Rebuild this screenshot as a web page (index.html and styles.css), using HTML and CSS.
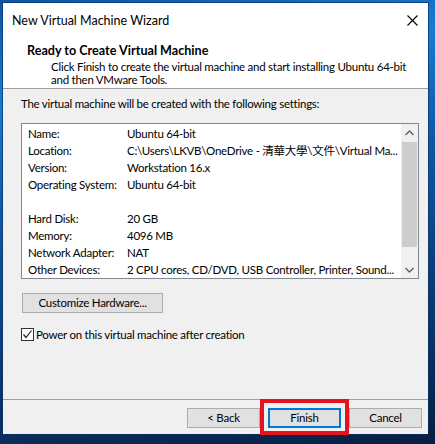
FILE: index.html
```html
<!DOCTYPE html>
<html>
<head>
<meta charset="utf-8">
<link rel="stylesheet" href="styles.css">
</head>
<body>
<div class="desktop">
  <div class="window">
    <div class="header">
      <div class="titlebar">
        <span class="title">New Virtual Machine Wizard</span>
        <svg class="close" width="11" height="11" viewBox="0 0 11 11"><path d="M0.5 0.5 L10.5 10.5 M10.5 0.5 L0.5 10.5" stroke="#000" stroke-width="1.1" fill="none"/></svg>
      </div>
      <div class="intro">
        <div class="intro-title">Ready to Create Virtual Machine</div>
        <div class="intro-desc">Click Finish to create the virtual machine and start installing Ubuntu 64-bit<br>and then VMware Tools.</div>
      </div>
    </div>
    <div class="content">
      <p class="lead">The virtual machine will be created with the following settings:</p>
      <div class="listbox">
        <div class="rows">
          <div class="row"><span class="key">Name:</span><span class="val">Ubuntu 64-bit</span></div>
          <div class="row"><span class="key">Location:</span><span class="val">C:\Users\LKVB\OneDrive - 清華大學\文件\Virtual Ma...</span></div>
          <div class="row"><span class="key">Version:</span><span class="val">Workstation 16.x</span></div>
          <div class="row"><span class="key">Operating System:</span><span class="val">Ubuntu 64-bit</span></div>
          <div class="row"></div>
          <div class="row"><span class="key">Hard Disk:</span><span class="val">20 GB</span></div>
          <div class="row"><span class="key">Memory:</span><span class="val">4096 MB</span></div>
          <div class="row"><span class="key">Network Adapter:</span><span class="val">NAT</span></div>
          <div class="row"><span class="key">Other Devices:</span><span class="val">2 CPU cores, CD/DVD, USB Controller, Printer, Sound...</span></div>
        </div>
        <div class="scrollbar">
          <div class="sb-btn"><svg width="9" height="6" viewBox="0 0 9 6"><path d="M0.5 5 L4.5 1 L8.5 5" stroke="#606060" stroke-width="1.4" fill="none"/></svg></div>
          <div class="sb-track"><div class="sb-thumb"></div></div>
          <div class="sb-btn"><svg width="9" height="6" viewBox="0 0 9 6"><path d="M0.5 1 L4.5 5 L8.5 1" stroke="#606060" stroke-width="1.4" fill="none"/></svg></div>
        </div>
      </div>
      <button class="btn btn-custom">Customize Hardware...</button>
      <label class="check">
        <span class="checkbox"><svg width="11" height="11" viewBox="0 0 11 11"><path d="M1.5 5.5 L4 8.5 L9.5 1.5" stroke="#222" stroke-width="1.2" fill="none"/></svg></span>
        <span>Power on this virtual machine after creation</span>
      </label>
    </div>
    <div class="footer">
      <button class="btn btn-nav">&lt; Back</button>
      <button class="btn btn-nav btn-default">Finish</button>
      <button class="btn btn-nav">Cancel</button>
    </div>
  </div>
  <div class="highlight"></div>
</div>
</body>
</html>
```
FILE: styles.css
```css
html, body {
  margin: 0;
  padding: 0;
}
body {
  width: 435px;
  height: 444px;
  overflow: hidden;
  font-family: Lato, "Noto Sans CJK TC", sans-serif;
  font-size: 11.5px;
  letter-spacing: -0.25px;
  color: #000;
}
.desktop {
  position: relative;
  width: 435px;
  height: 444px;
  padding: 3px 0 0 3px;
  box-sizing: border-box;
  background: linear-gradient(170deg, #0e56a0 0%, #1a7ad6 20%, #0f5aa8 40%, #0a3a74 70%, #071f40 100%);
}
.window {
  width: 425px;
  height: 431px;
  background: #f0f0f0;
  display: flex;
  flex-direction: column;
  box-shadow: 0 0 0 1px rgba(10, 50, 100, 0.7);
}
.header {
  background: #fff;
  border-bottom: 1px solid #a0a0a0;
  height: 85px;
  flex: none;
}
.titlebar {
  height: 34px;
  display: flex;
  align-items: center;
  justify-content: space-between;
  padding: 0 9px 0 9px;
}
.title {
  font-size: 12.5px;
  letter-spacing: 0;
  color: #000;
}
.close {
  margin-right: 1px;
}
.intro {
  padding: 7px 0 0 24px;
  white-space: nowrap;
}
.intro-title {
  font-weight: bold;
  font-size: 12.6px;
  letter-spacing: 0;
  line-height: 13px;
}
.intro-desc {
  margin: 3px 0 0 24px;
  line-height: 13px;
}
.content {
  flex: 1;
  padding: 0 0 0 18px;
}
.lead {
  margin: 8px 0 0 0;
  line-height: 13px;
  white-space: nowrap;
}
.listbox {
  margin-top: 13px;
  width: 398px;
  height: 156px;
  box-sizing: border-box;
  border: 1px solid #828790;
  background: #fff;
  display: flex;
}
.rows {
  flex: 1;
  min-width: 0;
  overflow: hidden;
  padding: 1px 0 0 6px;
}
.row {
  height: 17px;
  line-height: 17px;
  display: flex;
  white-space: nowrap;
}
.key {
  width: 99px;
  flex: none;
}
.scrollbar {
  width: 17px;
  flex: none;
  background: #f0f0f0;
  display: flex;
  flex-direction: column;
}
.sb-btn {
  height: 17px;
  display: flex;
  align-items: center;
  justify-content: center;
}
.sb-track {
  flex: 1;
  padding: 1px 1px 0 1px;
}
.sb-thumb {
  height: 105px;
  background: #cdcdcd;
}
.btn {
  font: inherit;
  letter-spacing: inherit;
  color: #000;
  background: #e1e1e1;
  border: 1px solid #adadad;
  padding: 0;
  margin: 0;
  height: 20px;
  line-height: 16px;
}
.btn-custom {
  display: block;
  margin: 14px 0 0 1px;
  width: 141px;
}
.check {
  display: flex;
  align-items: center;
  margin-top: 15px;
  gap: 2px;
}
.checkbox {
  width: 13px;
  height: 13px;
  box-sizing: border-box;
  border: 1px solid #333;
  background: #fff;
  display: flex;
  align-items: center;
  justify-content: center;
}
.footer {
  flex: none;
  height: 35px;
  box-sizing: border-box;
  border-top: 1px solid #a0a0a0;
  display: flex;
  justify-content: flex-end;
  align-items: flex-start;
  padding: 8px 6px 0 0;
  gap: 8px;
}
.btn-nav {
  width: 73px;
  height: 20px;
}
.btn-default {
  border: 1px solid #0078d7;
  box-shadow: inset 0 0 0 1px #0078d7;
}
.highlight {
  position: absolute;
  left: 260px;
  top: 399px;
  width: 89px;
  height: 36px;
  box-sizing: border-box;
  border: 4px solid #e3141f;
}
```
